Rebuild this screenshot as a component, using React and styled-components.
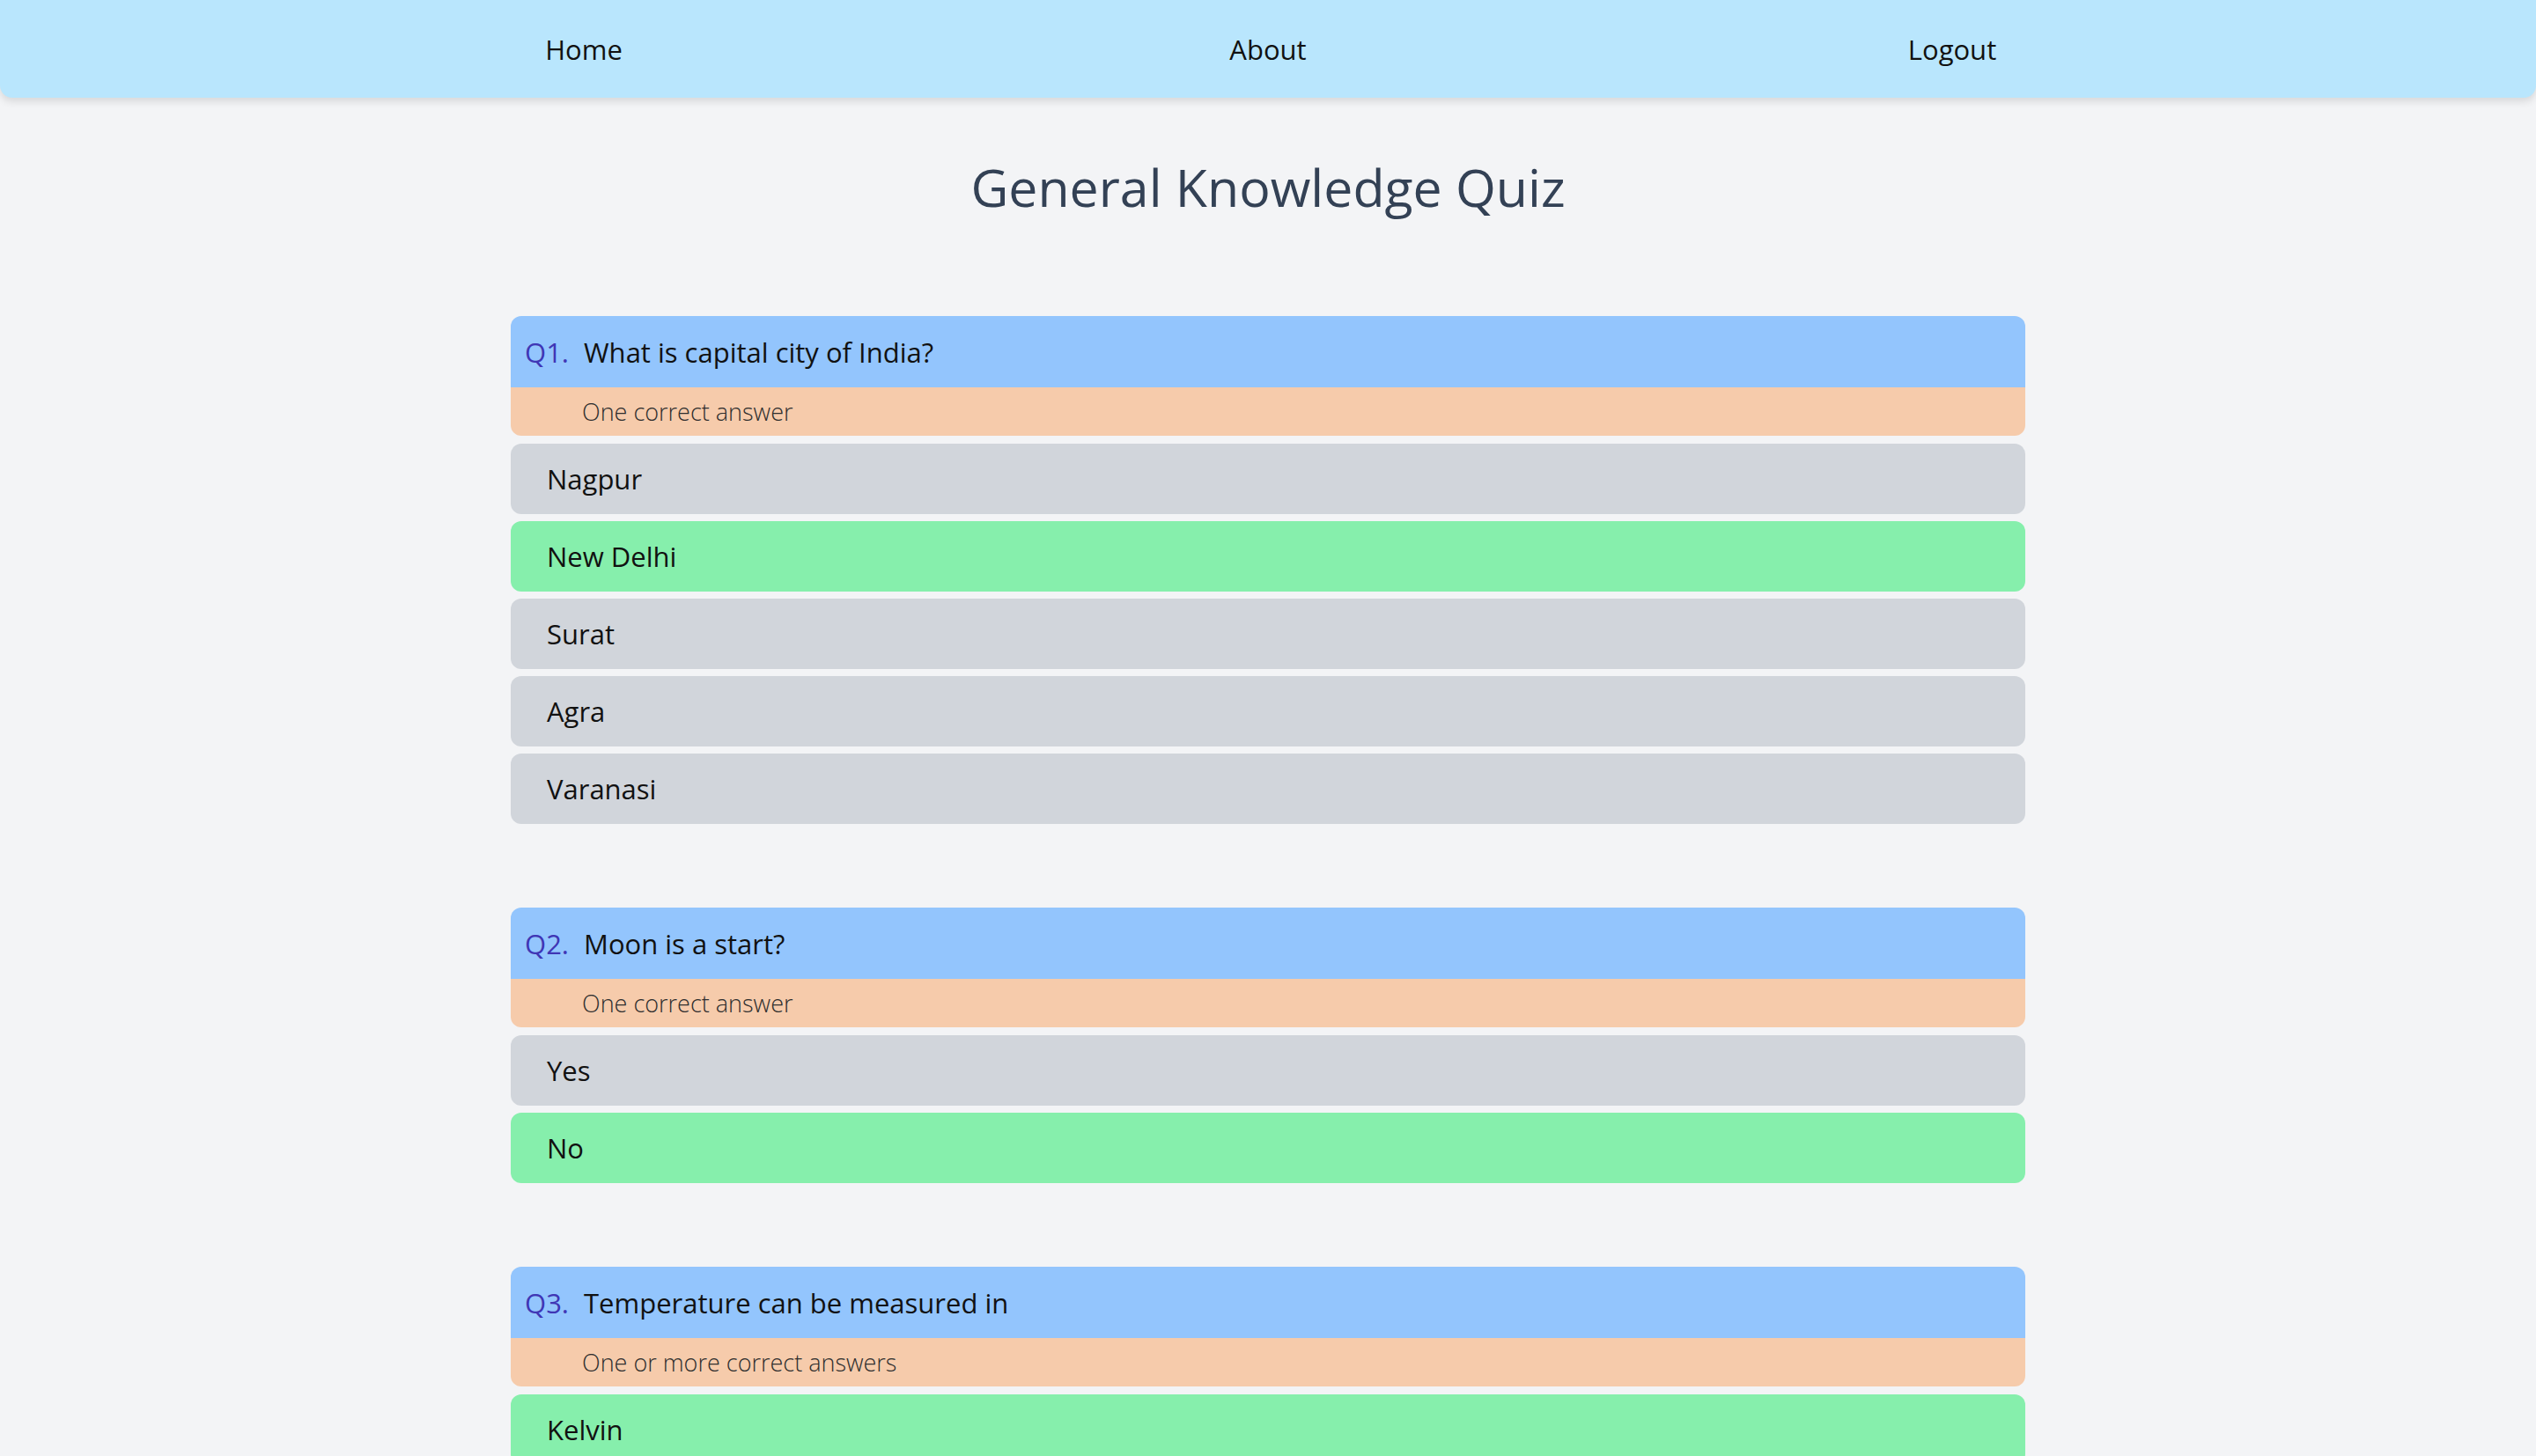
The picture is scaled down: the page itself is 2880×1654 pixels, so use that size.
import React from 'react';
import styled, { createGlobalStyle } from 'styled-components';

const GlobalStyle = createGlobalStyle`
    * {
        box-sizing: border-box;
    }
    body {
        margin: 0;
        background-color: #f3f4f6;
        font-family: "Open Sans", "Noto Sans", sans-serif;
    }
`;

const quiz = [
    {
        question: 'What is capital city of India?',
        hint: 'One correct answer',
        options: [
            { text: 'Nagpur' },
            { text: 'New Delhi', correct: true },
            { text: 'Surat' },
            { text: 'Agra' },
            { text: 'Varanasi' },
        ],
    },
    {
        question: 'Moon is a start?',
        hint: 'One correct answer',
        options: [
            { text: 'Yes' },
            { text: 'No', correct: true },
        ],
    },
    {
        question: 'Temperature can be measured in',
        hint: 'One or more correct answers',
        options: [
            { text: 'Kelvin', correct: true },
            { text: 'Celsius', correct: true },
            { text: 'Meter' },
        ],
    },
];

const Navbar = styled.nav`
    height: 111px;
    background-color: #b9e6fd;
    border-radius: 0 0 14px 14px;
    box-shadow: 0 4px 10px rgba(0, 0, 0, 0.12);
    display: grid;
    grid-template-columns: repeat(3, 777px);
    justify-content: center;
    align-items: center;
`;

const NavLink = styled.a`
    text-align: center;
    font-size: 31px;
    color: #111;
    text-decoration: none;
    cursor: pointer;
`;

const Title = styled.h1`
    margin: 64px 0 0;
    text-align: center;
    font-size: 59px;
    line-height: 74px;
    font-weight: 400;
    color: #334155;
`;

const QuizList = styled.main`
    width: 1720px;
    margin: 110px auto 0;
    display: flex;
    flex-direction: column;
    gap: 95px;
`;

const Card = styled.section`
    display: flex;
    flex-direction: column;
    gap: 8px;
`;

const QuestionBlock = styled.div`
    border-radius: 12px;
    overflow: hidden;
    margin-bottom: 1px;
`;

const QuestionHead = styled.div`
    height: 81px;
    background-color: #93c5fd;
    display: flex;
    align-items: center;
    padding-left: 16px;
    font-size: 31px;
    color: #111;
`;

const Number = styled.span`
    color: #3f36b5;
    width: 67px;
`;

const Hint = styled.div`
    height: 55px;
    background-color: #f6cbab;
    display: flex;
    align-items: center;
    padding-left: 81px;
    font-size: 27px;
    font-weight: 300;
    color: #2e2e2e;
`;

const Option = styled.div`
    height: 80px;
    border-radius: 12px;
    background-color: ${(p) => (p.$correct ? '#86efac' : '#d1d5db')};
    display: flex;
    align-items: center;
    padding-left: 41px;
    font-size: 31px;
    color: #111;
`;

export default function App() {
    return (
        <>
            <GlobalStyle />
            <Navbar>
                <NavLink>Home</NavLink>
                <NavLink>About</NavLink>
                <NavLink>Logout</NavLink>
            </Navbar>
            <Title>General Knowledge Quiz</Title>
            <QuizList>
                {quiz.map((q, i) => (
                    <Card key={i}>
                        <QuestionBlock>
                            <QuestionHead>
                                <Number>Q{i + 1}.</Number>
                                {q.question}
                            </QuestionHead>
                            <Hint>{q.hint}</Hint>
                        </QuestionBlock>
                        {q.options.map((o) => (
                            <Option key={o.text} $correct={o.correct}>{o.text}</Option>
                        ))}
                    </Card>
                ))}
            </QuizList>
        </>
    );
}
